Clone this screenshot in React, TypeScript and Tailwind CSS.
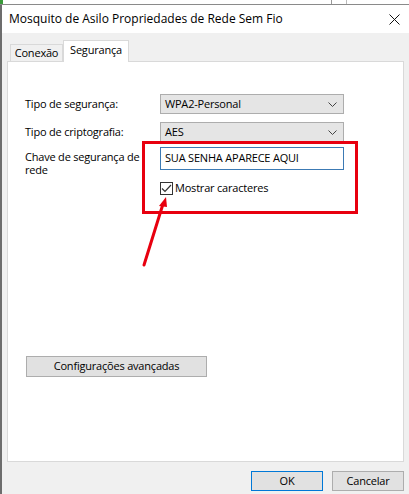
import React from 'react';

const font = { fontFamily: '"Open Sans", "Noto Sans", Arial, sans-serif' };

function Select({ value }: { value: string }) {
  return (
    <div className="flex h-[20px] w-[184px] items-center justify-between border border-[#adadad] bg-[#e5e5e5] pl-[4px] pr-[6px] text-black">
      <span>{value}</span>
      <svg width="9" height="5" viewBox="0 0 9 5" className="text-[#444]">
        <path d="M0.5 0.5 L4.5 4.5 L8.5 0.5" fill="none" stroke="currentColor" strokeWidth="1" />
      </svg>
    </div>
  );
}

export default function App() {
  return (
    <div className="relative flex h-[494px] w-[409px] flex-col overflow-hidden bg-[#f0f0f0] text-black" style={font}>
      {/* background window, mostly hidden */}
      <div className="relative h-[5px] shrink-0 overflow-hidden border-b border-[#8a8a8a] bg-white">
        <div className="absolute left-0 top-[-2px] h-[6px] w-[3px] bg-[#3a9a3a]" />
        <span className="absolute left-[17px] top-[-11px] text-[12px] leading-[14px] text-[#555]">Status de Wi-Fi</span>
        <div className="absolute left-[331px] top-0 h-full w-px bg-[#999]" />
        <div className="absolute left-[346px] top-0 h-full w-px bg-[#bbb]" />
      </div>

      <div className="flex flex-1 flex-col border-l-2 border-[#6d6d6d] text-[11px] tracking-[-0.2px]">
        {/* title bar */}
        <div className="flex h-[28px] shrink-0 items-center justify-between bg-white pl-[7px] pr-[9px] tracking-normal">
          <span className="text-[12px]">Mosquito de Asilo Propriedades de Rede Sem Fio</span>
          <svg width="11" height="11" viewBox="0 0 11 11">
            <path d="M0.5 0.5 L10.5 10.5 M10.5 0.5 L0.5 10.5" stroke="#111" strokeWidth="1" />
          </svg>
        </div>

        {/* tabs */}
        <div className="flex h-[28px] shrink-0 items-end pl-[5px]">
          <div className="relative ml-[3px] flex h-[17px] w-[53px] items-center justify-center border border-b-0 border-[#d9d9d9] bg-[#f0f0f0]">
            Conexão
          </div>
          <div className="relative z-10 mb-[-1px] flex h-[22px] w-[66px] items-center justify-center border border-b-0 border-[#d9d9d9] bg-white pb-[2px]">
            Segurança
          </div>
        </div>

        {/* tab panel */}
        <div className="relative mx-[5px] h-[401px] shrink-0 border border-[#d9d9d9] bg-white">
          <div className="grid grid-cols-[135px_1fr] items-center gap-y-[8px] pl-[17px] pt-[32px]">
            <span>Tipo de segurança:</span>
            <Select value="WPA2-Personal" />
            <span>Tipo de criptografia:</span>
            <Select value="AES" />
          </div>

          <div className="mt-[5px] grid grid-cols-[135px_1fr] pl-[17px]">
            <span className="pt-[3px] leading-[13px]">Chave de segurança de rede</span>
            <div className="flex flex-col">
              <div className="flex h-[23px] w-[184px] items-center border border-[#3c7ab4] bg-white pl-[4px]">
                SUA SENHA APARECE AQUI
              </div>
              <label className="mt-[10px] flex items-center gap-[2px]">
                <span className="flex h-[13px] w-[13px] items-center justify-center border border-[#333] bg-white">
                  <svg width="11" height="9" viewBox="0 0 11 9">
                    <path d="M1 4.5 L4 7.5 L10 1" fill="none" stroke="#333" strokeWidth="1.2" />
                  </svg>
                </span>
                <span>Mostrar caracteres</span>
              </label>
            </div>
          </div>

          <div className="ml-[18px] mt-[159px] flex h-[21px] w-[181px] items-center justify-center border border-[#adadad] bg-[#e1e1e1]">
            Configurações avançadas
          </div>

          {/* red highlight */}
          <div className="absolute left-[134px] top-[79px] h-[73px] w-[216px] border-[3px] border-[#e8000f]" />
          <svg className="absolute left-[130px] top-[130px]" width="40" height="80" viewBox="0 0 40 80">
            <path d="M6 73 L25 12" stroke="#e8000f" strokeWidth="3" strokeLinecap="round" />
            <path d="M28 5 L21 14 L29 15 Z" fill="#e8000f" />
          </svg>
        </div>

        {/* buttons */}
        <div className="flex justify-end gap-[9px] pr-[5px] pt-[9px]">
          <div className="flex h-[20px] w-[72px] items-center justify-center border border-[#0078d7] bg-[#e1e1e1]">OK</div>
          <div className="flex h-[20px] w-[72px] items-center justify-center border border-[#adadad] bg-[#e1e1e1]">Cancelar</div>
        </div>
      </div>
    </div>
  );
}
